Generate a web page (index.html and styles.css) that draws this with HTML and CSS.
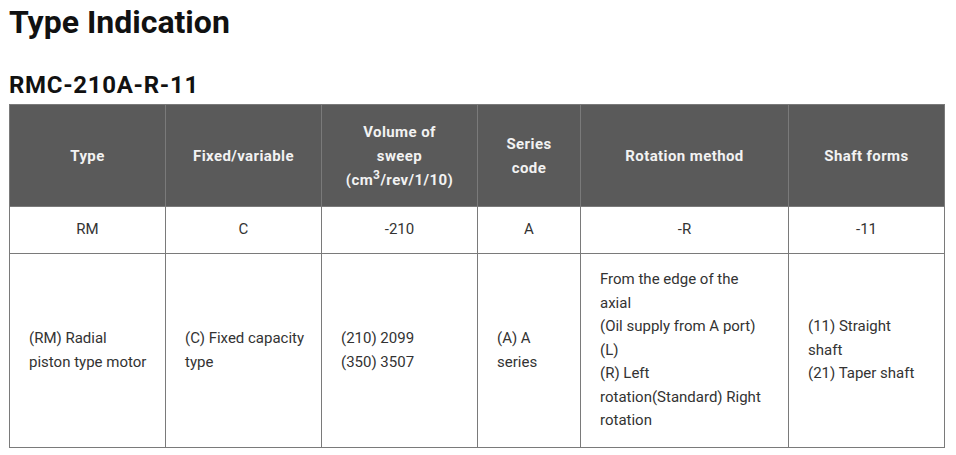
FILE: index.html
```html
<!DOCTYPE html>
<html lang="en">
<head>
<meta charset="utf-8">
<title>Type Indication</title>
<link rel="stylesheet" href="styles.css">
</head>
<body>
<h1 class="title">Type Indication</h1>
<h2 class="model">RMC-210A-R-11</h2>
<table class="spec">
  <colgroup>
    <col class="c1"><col class="c2"><col class="c3"><col class="c4"><col class="c5"><col class="c6">
  </colgroup>
  <thead>
    <tr>
      <th>Type</th>
      <th>Fixed/variable</th>
      <th>Volume of<br>sweep<br>(cm<sup>3</sup>/rev/1/10)</th>
      <th>Series<br>code</th>
      <th>Rotation method</th>
      <th>Shaft forms</th>
    </tr>
  </thead>
  <tbody>
    <tr class="codes">
      <td>RM</td>
      <td>C</td>
      <td>-210</td>
      <td>A</td>
      <td>-R</td>
      <td>-11</td>
    </tr>
    <tr class="desc">
      <td>(RM) Radial<br>piston type motor</td>
      <td>(C) Fixed capacity<br>type</td>
      <td>(210) 2099<br>(350) 3507</td>
      <td>(A) A<br>series</td>
      <td>From the edge of the<br>axial<br>(Oil supply from A port)<br>(L)<br>(R) Left<br>rotation(Standard) Right<br>rotation</td>
      <td>(11) Straight<br>shaft<br>(21) Taper shaft</td>
    </tr>
  </tbody>
</table>
</body>
</html>
```
FILE: styles.css
```css
html, body {
  margin: 0;
  padding: 0;
  background: #ffffff;
}
body {
  padding: 0 9px;
  font-family: Roboto, "Noto Sans", "Liberation Sans", sans-serif;
  color: #333333;
}
.title {
  margin: 0;
  padding-top: 2px;
  font-size: 32px;
  line-height: 40px;
  font-weight: 700;
  color: #111111;
}
.model {
  margin: 0 0 1px;
  padding-top: 25px;
  font-size: 24px;
  line-height: 36px;
  font-weight: 700;
  letter-spacing: 0.7px;
  color: #111111;
}
.spec {
  border-collapse: collapse;
  width: 936px;
  table-layout: fixed;
  font-size: 15px;
  line-height: 23.5px;
}
.c1, .c2, .c3, .c6 { width: 156px; }
.c4 { width: 103px; }
.c5 { width: 208px; }
.spec th, .spec td {
  border: 1px solid #7a7a7a;
  vertical-align: middle;
}
.spec th {
  background: #5a5a5a;
  color: #f2f2f2;
  font-weight: 700;
  text-align: center;
  height: 101px;
  padding: 0 8px;
  line-height: 24px;
  letter-spacing: 0.4px;
}
.spec sup {
  font-size: 12px;
  line-height: 0;
  vertical-align: 6px;
}
.codes td {
  text-align: center;
  height: 46px;
  padding: 0 10px;
}
.desc td {
  text-align: left;
  height: 193px;
  padding: 0 10px 0 19px;
}
```
